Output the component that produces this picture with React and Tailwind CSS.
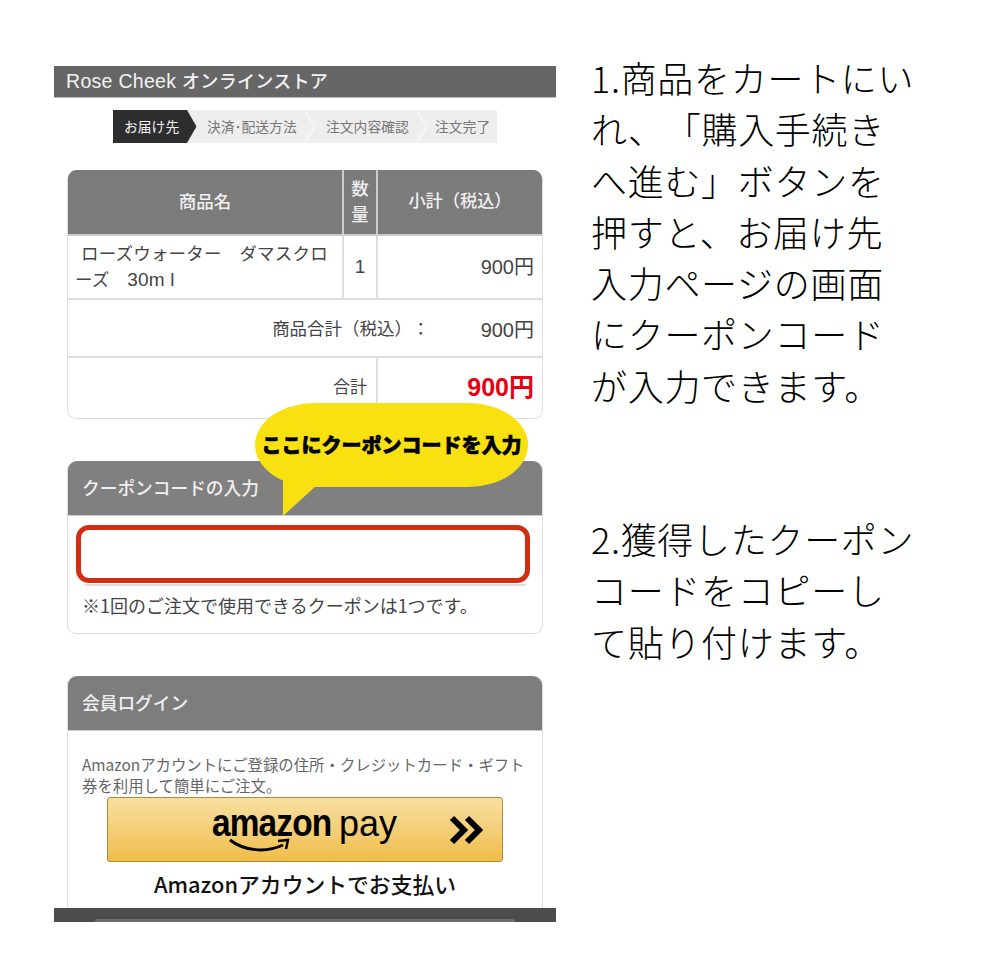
const JP = "font-['Noto_Sans_CJK_JP','Noto_Sans',sans-serif]";
const LATIN = "font-['Liberation_Sans','Noto_Sans_CJK_JP',sans-serif]";

function Chevron({ dark }) {
  return (
    <svg className="absolute right-[-10px] top-0 z-10" width="10" height="33" viewBox="0 0 10 33">
      <path d="M0 0 L9.5 16.5 L0 33 Z" fill={dark ? "#2d2d2d" : "#eeeeee"} />
      {!dark && <path d="M0 0 L9.5 16.5 L0 33" fill="none" stroke="#ffffff" strokeWidth="1" />}
    </svg>
  );
}

function Steps() {
  const steps = [
    { label: "決済･配送方法", w: "w-[118px] pl-[20px]" },
    { label: "注文内容確認", w: "w-[112px] pl-[21px]" },
    { label: "注文完了", w: "w-[80px] pl-[18px]" },
  ];
  return (
    <div className="flex h-[33px] ml-[59px] mt-[12px] w-[384px] bg-[#eeeeee] text-[13.8px] leading-[33px]">
      <div className="relative w-[74px] bg-[#2d2d2d] pl-[11px] text-[#f2f2f2]">
        お届け先
        <Chevron dark />
      </div>
      {steps.map((s, i) => (
        <div key={s.label} className={`relative ${s.w} text-[#777777]`}>
          {s.label}
          {i < 2 && <Chevron />}
        </div>
      ))}
    </div>
  );
}

function CartTable() {
  return (
    <div className={`mx-[13px] mt-[27px] h-[249px] overflow-hidden rounded-[9px] border border-[#dddddd] border-t-0 grid grid-cols-[276px_34px_1fr] grid-rows-[64px_66px_58px_1fr] text-[#444444] ${LATIN}`}>
      <div className="flex items-center justify-center bg-[#7b7b7b] text-[17.5px] font-medium text-[#f0f0f0] border-r-2 border-[#cccccc]">商品名</div>
      <div className="flex items-center justify-center bg-[#7b7b7b] text-[17.5px] leading-[26px] font-medium text-[#f0f0f0] border-r-2 border-[#cccccc] text-center">数<br />量</div>
      <div className="flex items-center justify-center bg-[#7b7b7b] text-[17.2px] font-medium text-[#f0f0f0]">小計（税込）</div>

      <div className="border-r-2 border-y-2 border-t-[#cccccc] border-b-[#dddddd] border-r-[#dddddd] pl-[7px] pr-[6px] pt-[5px] text-[17.5px] leading-[26px] tracking-[0.2px]">
        <span className="ml-[6px]">ローズウォーター　ダマスクロ</span>
        <br />
        ーズ　<span className="text-[19px]">30m l</span>
      </div>
      <div className="flex items-center justify-center border-r-2 border-y-2 border-t-[#cccccc] border-b-[#dddddd] border-r-[#dddddd] text-[19px]">1</div>
      <div className="flex items-center justify-end border-y-2 border-t-[#cccccc] border-b-[#dddddd] pr-[8px] text-[20px]">900円</div>

      <div className="col-span-3 flex items-center justify-end border-b-2 border-[#dddddd] pr-[8px] pt-[3px] text-[17.5px]">
        <span>商品合計（税込）：</span>
        <span className="ml-[51px] text-[20px]">900円</span>
      </div>

      <div className="col-span-2 flex items-center justify-end border-r-2 border-[#dddddd] pr-[9px] text-[17px]">合計</div>
      <div className="flex items-center justify-end pr-[8px] text-[25px] font-bold text-[#e60012]">900円</div>
    </div>
  );
}

function CouponCard() {
  return (
    <div className="relative mx-[13px] mt-[42px] h-[173px] rounded-[9px] border border-[#dddddd] border-t-0">
      <div className="flex h-[55px] items-center rounded-t-[9px] bg-[#808080] pl-[14px] pb-[2px] text-[17.7px] font-medium text-[#f0f0f0] border-b border-[#cccccc]">
        クーポンコードの入力
      </div>
      <div className="ml-[15px] mr-[15px] mt-[16px] h-[54px] rounded-b-[4px] border-b-2 border-[#dddddd]" />
      <p className="ml-[14px] mt-[6px] text-[18px] leading-[26px] text-[#444444]">※1回のご注文で使用できるクーポンは1つです。</p>

      {/* red highlight over the input */}
      <div className="absolute left-[8px] top-[64px] h-[58px] w-[454px] rounded-[13px] border-[5px] border-[#d22c12]" />

      {/* speech bubble */}
      <div className="absolute left-[187px] top-[-58px] flex h-[84px] w-[273px] items-center justify-center rounded-[60px/42px] bg-[#f9e010] text-[20px] font-black text-black whitespace-nowrap [-webkit-text-stroke:0.6px_black]">
        ここにクーポンコードを入力
      </div>
      <svg className="absolute left-[215px] top-[16px]" width="50" height="40" viewBox="0 0 50 40">
        <path d="M0 0 H50 V8 H34 L0 39 Z" fill="#f9e010" />
      </svg>
    </div>
  );
}

function AmazonButton() {
  return (
    <div className={`relative ml-[39px] mt-[1px] h-[65px] w-[396px] rounded-[3px] border border-[#b08a3c] bg-gradient-to-b from-[#f8dfa0] to-[#f0bd46] text-black ${LATIN}`}>
      <div className="absolute left-[104px] top-[3px] flex items-baseline text-[38px] leading-[44px]">
        <span className="inline-block w-[127px] origin-left scale-x-[0.88] font-bold tracking-[-1px]">amazon</span>
        <span className="text-[36px]">pay</span>
      </div>
      <svg className="absolute left-[120px] top-[38px]" width="68" height="20" viewBox="0 0 68 20">
        <path d="M2 4 C16 15 38 17 55 9" fill="none" stroke="#000" strokeWidth="3" />
        <path d="M50 5 L60 4 L58 13" fill="none" stroke="#000" strokeWidth="2.5" />
      </svg>
      <svg className="absolute left-[341px] top-[17px]" width="34" height="30" viewBox="0 0 34 30">
        <path d="M3 3 L15 15 L3 27 M18 3 L30 15 L18 27" fill="none" stroke="#000" strokeWidth="6" />
      </svg>
    </div>
  );
}

function LoginCard() {
  return (
    <div className="mx-[13px] mt-[42px] h-[232px] rounded-t-[9px] border-x border-[#dddddd]">
      <div className="flex h-[55px] items-center rounded-t-[9px] bg-[#7d7d7d] pl-[14px] pb-[2px] text-[17.7px] font-medium text-[#f0f0f0] border-b border-[#cccccc]">
        会員ログイン
      </div>
      <p className="ml-[14px] mt-[23px] w-[450px] text-[15.4px] leading-[21px] text-[#666666]">
        Amazonアカウントにご登録の住所・クレジットカード・ギフト券を利用して簡単にご注文。
      </p>
      <AmazonButton />
      <p className="mt-[8px] text-center text-[21.8px] leading-[28px] font-medium text-[#111111]">Amazonアカウントでお支払い</p>
    </div>
  );
}

function Instructions() {
  const first = ["1.商品をカートにい", "れ、「購入手続き", "へ進む」ボタンを", "押すと、お届け先", "入力ページの画面", "にクーポンコード", "が入力できます。"];
  const second = ["2.獲得したクーポン", "コードをコピーし", "て貼り付けます。"];
  return (
    <div className="ml-[35px] pt-[52px] text-[36px] leading-[51.3px] font-light tracking-[0.7px] text-black whitespace-nowrap">
      {first.map((l) => <div key={l}>{l}</div>)}
      <div className="mt-[102px]">
        {second.map((l) => <div key={l}>{l}</div>)}
      </div>
    </div>
  );
}

export default function App() {
  return (
    <div className={`flex min-h-[960px] bg-white pl-[54px] [text-spacing-trim:space-all] ${JP}`}>
      <div className="w-[502px] pt-[66px]">
        <div className="flex h-[32px] items-center bg-[#666666] pl-[12px] pt-[1px] text-[18px] font-medium text-[#f2f2f2] border-b border-[#bbbbbb]">
          <span className="font-['Liberation_Sans','Noto_Sans_CJK_JP',sans-serif] text-[19.5px] tracking-[0.3px]">Rose Cheek <span className="text-[18px]">オンラインストア</span></span>
        </div>
        <Steps />
        <CartTable />
        <CouponCard />
        <LoginCard />
        <div className="h-[14px] overflow-hidden bg-[#4c4c4c]">
          <div className="mx-[41px] mt-[11px] h-[3px] rounded-t-[8px] bg-[#6e6e6e]" />
        </div>
      </div>
      <Instructions />
    </div>
  );
}
